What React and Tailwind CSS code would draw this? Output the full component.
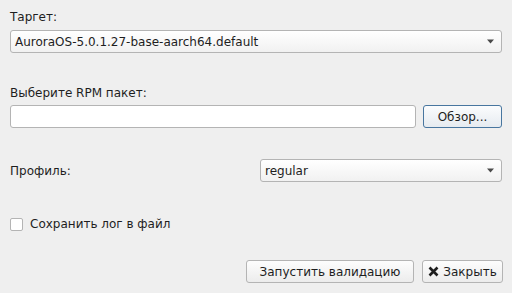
import React from "react";

function Arrow() {
  return (
    <svg width="9" height="5" viewBox="0 0 9 5" className="shrink-0">
      <path d="M1 0.5 L8 0.5 L4.5 4.5 Z" fill="#4a4a4a" />
    </svg>
  );
}

function Combo({ text, className = "" }) {
  return (
    <div
      className={
        "flex items-center justify-between h-[23px] rounded-[3px] border border-[#b4b4b4] bg-gradient-to-b from-[#ffffff] to-[#f1f1f1] pl-[4px] pr-[6px] " +
        className
      }
    >
      <span className="leading-[14px]">{text}</span>
      <Arrow />
    </div>
  );
}

export default function App() {
  return (
    <div
      className="w-[512px] h-[293px] bg-[#efefef] flex flex-col pl-[10px] pr-[10px] text-[12px] text-[#1e1e1e] overflow-hidden"
      style={{ fontFamily: '"DejaVu Sans", sans-serif' }}
    >
      <div className="mt-[10px] h-[14px] leading-[14px]">Таргет:</div>
      <Combo text="AuroraOS-5.0.1.27-base-aarch64.default" className="mt-[6px]" />

      <div className="mt-[33px] h-[14px] leading-[14px]">Выберите RPM пакет:</div>
      <div className="mt-[5px] flex gap-[7px]">
        <div className="flex-1 h-[23px] rounded-[3px] border border-[#b4b4b4] bg-white"></div>
        <div className="w-[79px] h-[23px] rounded-[3px] border border-[#48769f] bg-gradient-to-b from-[#fbfcfd] to-[#e6ebf0] flex items-center justify-center leading-[14px]">
          Обзор...
        </div>
      </div>

      <div className="mt-[31px] flex items-center h-[23px]">
        <div className="w-[250px] leading-[14px]">Профиль:</div>
        <Combo text="regular" className="flex-1" />
      </div>

      <div className="mt-[35px] flex items-center gap-[7px] h-[14px]">
        <div className="w-[13px] h-[13px] rounded-[2px] border border-[#b4b4b4] bg-white"></div>
        <span className="leading-[14px]">Сохранить лог в файл</span>
      </div>

      <div className="mt-[29px] flex justify-end gap-[8px] -mr-px">
        <div className="w-[168px] h-[23px] rounded-[3px] border border-[#b4b4b4] bg-gradient-to-b from-[#fdfdfd] to-[#ececec] flex items-center justify-center leading-[14px]">
          Запустить валидацию
        </div>
        <div className="w-[81px] h-[23px] rounded-[3px] border border-[#b4b4b4] bg-gradient-to-b from-[#fdfdfd] to-[#ececec] flex items-center justify-center gap-[4px] leading-[14px]">
          <svg width="11" height="11" viewBox="0 0 11 11">
            <path d="M1.5 1.5 L9.5 9.5 M9.5 1.5 L1.5 9.5" stroke="#1e1e1e" strokeWidth="2.6" strokeLinecap="butt" />
          </svg>
          <span>Закрыть</span>
        </div>
      </div>
    </div>
  );
}
